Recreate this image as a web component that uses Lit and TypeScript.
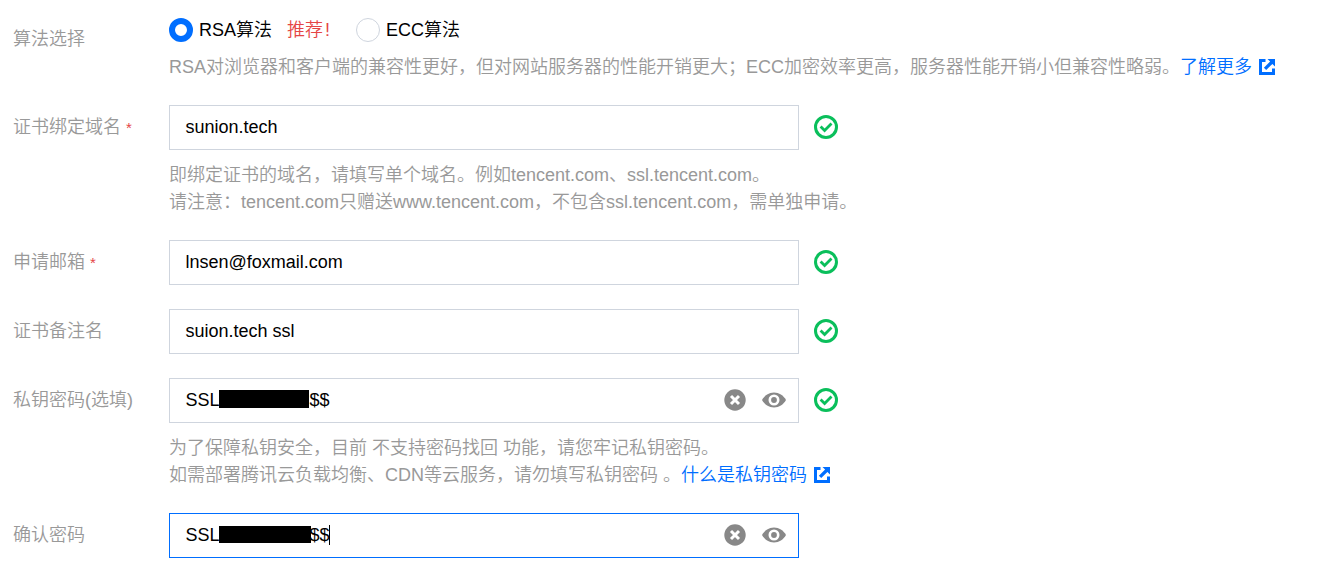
import { LitElement, html, svg, css, nothing } from "lit";
import { customElement, property, state } from "lit/decorators.js";

const okIcon = svg`
  <circle cx="12" cy="12" r="10.500" fill="none" stroke="#0abf5b" stroke-width="3" />
  <path d="M6.600 11.500l4 4 6.900-6.900" fill="none" stroke="#0abf5b" stroke-width="2.800" />
`;

const clearIcon = svg`
  <circle cx="12" cy="12" r="10.700" fill="#888" />
  <path d="M8 8l8 8M16 8l-8 8" stroke="#fff" stroke-width="3" />
`;

const eyeIcon = svg`
  <path d="M0 12C2.600 7.400 7 4.500 12 4.500S21.400 7.400 24 12C21.400 16.600 17 19.500 12 19.500S2.600 16.600 0 12z" fill="#888" />
  <circle cx="12" cy="12" r="4.200" fill="#888" stroke="#fff" stroke-width="2.600" />
`;

const linkIcon = svg`
  <path d="M6.500 1.500H1.500V14.500H14.500V9.500" fill="none" stroke="#006eff" stroke-width="3" />
  <path d="M8.500 0H16V7.500L13.400 4.900L7.200 11.100L4.900 8.800L11.100 2.600z" fill="#006eff" />
`;

@customElement("form-row")
class FormRow extends LitElement {
  @property() label = "";
  @property({ type: Boolean }) required = false;

  static styles = css`
    :host {
      display: grid;
      grid-template-columns: 156px 1fr;
    }

    .label {
      color: #999;
      line-height: 27px;
      padding-top: var(--label-top, 9px);
      white-space: nowrap;
    }

    .star {
      display: inline-block;
      color: #e54545;
      font-size: 15px;
      line-height: 20px;
      margin-left: 5px;
      vertical-align: 0;
    }
  `;

  render() {
    return html`
      <div class="label">
        ${this.label}${this.required ? html`<span class="star">*</span>` : nothing}
      </div>
      <div><slot></slot></div>
    `;
  }
}

@customElement("text-field")
class TextField extends LitElement {
  @property({ type: Boolean }) focused = false;
  @property({ type: Boolean }) secret = false;
  @property({ type: Boolean }) valid = false;

  static styles = css`
    :host {
      display: flex;
      align-items: center;
      gap: 15px;
    }

    .box {
      box-sizing: border-box;
      display: flex;
      align-items: center;
      width: 630px;
      height: 45px;
      padding: 0 12px 0 15.5px;
      border: 1px solid #cfd5de;
      color: #000;
    }

    .box.focused {
      border-color: #006eff;
    }

    .value {
      display: flex;
      align-items: center;
      flex: 1;
      line-height: 27px;
      white-space: pre;
      padding-bottom: 1px;
    }

    .actions {
      display: flex;
      gap: 15px;
    }

    svg {
      display: block;
      width: 24px;
      height: 24px;
      margin-bottom: 1px;
    }
  `;

  render() {
    return html`
      <div class="box ${this.focused ? "focused" : ""}">
        <div class="value"><slot></slot></div>
        ${this.secret
          ? html`
              <div class="actions">
                <svg viewBox="0 0 24 24">${clearIcon}</svg>
                <svg viewBox="0 0 24 24">${eyeIcon}</svg>
              </div>
            `
          : nothing}
      </div>
      ${this.valid ? html`<svg viewBox="0 0 24 24">${okIcon}</svg>` : nothing}
    `;
  }
}

@customElement("app-root")
class AppRoot extends LitElement {
  @state() algorithm = "RSA";

  static styles = css`
    :host {
      display: block;
      box-sizing: border-box;
      width: 1323px;
      height: 568px;
      overflow: hidden;
      padding: 16px 0 0 13px;
      background: #fff;
      font-family: "Liberation Sans", "Noto Sans CJK SC", sans-serif;
      font-size: 18px;
      font-weight: 350;
    }

    .form {
      display: flex;
      flex-direction: column;
      gap: 24px;
    }

    .first {
      --label-top: 10px;
    }

    .radios {
      display: flex;
      height: 28px;
      line-height: 28px;
      margin-bottom: 10px;
    }

    .radio {
      display: flex;
      align-items: center;
      gap: 6px;
      color: #000;
      cursor: pointer;
    }

    .dot {
      box-sizing: border-box;
      width: 24px;
      height: 24px;
      border: 1px solid #cfd5de;
      border-radius: 50%;
    }

    .dot.checked {
      border: 6px solid #006eff;
    }

    .tip {
      width: 69px;
      margin-left: 15px;
      color: #e54545;
    }

    .mark {
      margin-left: 2px;
    }

    .hint {
      color: #999;
      line-height: 27px;
      white-space: nowrap;
    }

    .below {
      margin-top: 12px;
    }

    .line {
      height: 27px;
    }

    .link {
      color: #006eff;
      text-decoration: none;
    }

    .link svg {
      width: 16px;
      height: 16px;
      margin-left: 7px;
      vertical-align: -2px;
    }

    .mask {
      width: 90px;
      height: 18px;
      margin: 0 0.5px 2px -0.5px;
      background: #000;
    }

    .mask.wide {
      width: 92px;
      height: 17px;
      margin-right: -1.5px;
    }

    .caret {
      width: 1px;
      height: 20px;
      margin-left: -0.5px;
      background: #000;
    }
  `;

  radio(name: string) {
    return html`
      <label class="radio" @click=${() => (this.algorithm = name)}>
        <span class="dot ${this.algorithm === name ? "checked" : ""}"></span>
        <span>${name}算法</span>
      </label>
    `;
  }

  link(text: string) {
    return html`<a class="link">${text}<svg viewBox="0 0 16 16">${linkIcon}</svg></a>`;
  }

  render() {
    return html`
      <div class="form">
        <form-row class="first" label="算法选择">
          <div class="radios">
            ${this.radio("RSA")}
            <span class="tip">推荐<span class="mark">!</span></span>
            ${this.radio("ECC")}
          </div>
          <div class="hint">
            <div class="line">RSA对浏览器和客户端的兼容性更好，但对网站服务器的性能开销更大；ECC加密效率更高，服务器性能开销小但兼容性略弱。${this.link("了解更多")}</div>
          </div>
        </form-row>

        <form-row label="证书绑定域名" required>
          <text-field valid>sunion.tech</text-field>
          <div class="hint below">
            <div class="line">即绑定证书的域名，请填写单个域名。例如tencent.com、ssl.tencent.com。</div>
            <div class="line">请注意：tencent.com只赠送www.tencent.com，不包含ssl.tencent.com，需单独申请。</div>
          </div>
        </form-row>

        <form-row label="申请邮箱" required>
          <text-field valid>lnsen@foxmail.com</text-field>
        </form-row>

        <form-row label="证书备注名">
          <text-field valid>suion.tech ssl</text-field>
        </form-row>

        <form-row label="私钥密码(选填)">
          <text-field secret valid><span>SSL</span><span class="mask"></span><span>$$</span></text-field>
          <div class="hint below">
            <div class="line">为了保障私钥安全，目前 不支持密码找回 功能，请您牢记私钥密码。</div>
            <div class="line">如需部署腾讯云负载均衡、CDN等云服务，请勿填写私钥密码 。${this.link("什么是私钥密码")}</div>
          </div>
        </form-row>

        <form-row label="确认密码">
          <text-field secret focused><span>SSL</span><span class="mask wide"></span><span>$$</span><span class="caret"></span></text-field>
        </form-row>
      </div>
    `;
  }
}
